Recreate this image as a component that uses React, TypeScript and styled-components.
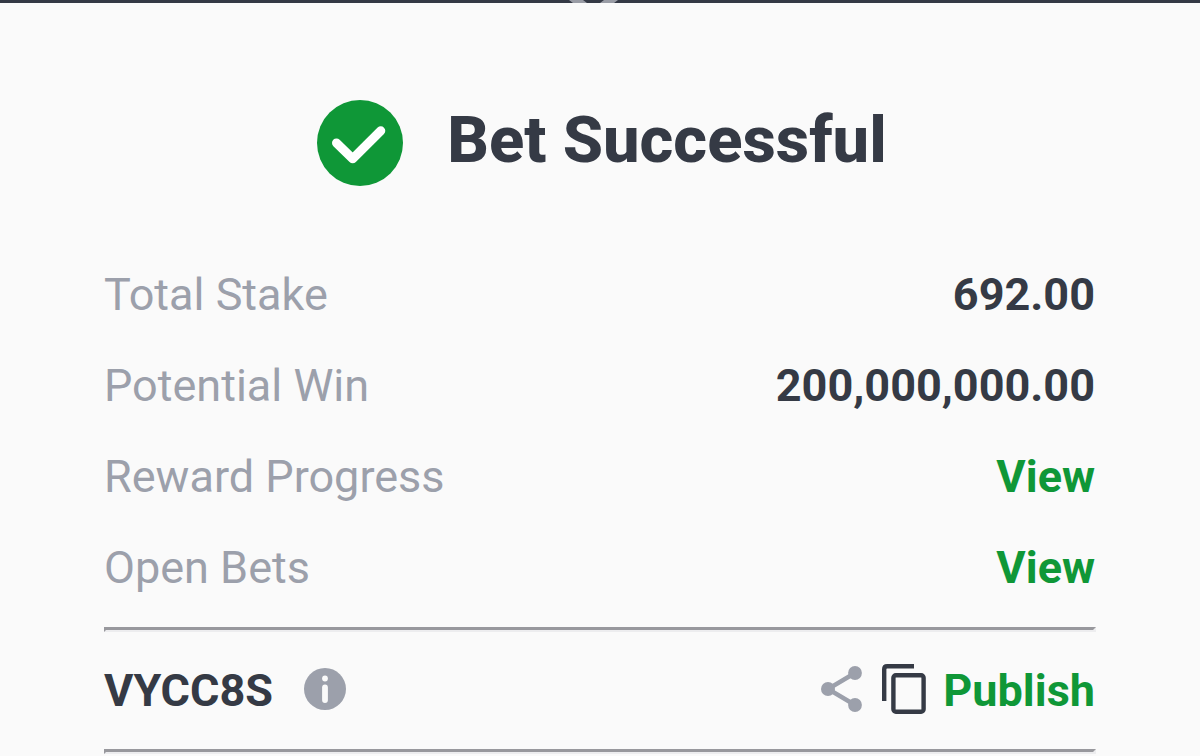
import React from "react";
import styled, { createGlobalStyle } from "styled-components";

const ink = "#353a45";
const muted = "#9ca0ab";
const green = "#0f9737";

const GlobalStyle = createGlobalStyle`
  * { box-sizing: border-box; }
  html { overflow: hidden; }
  body {
    margin: 0;
    background: #fafafa;
    color: ${ink};
    font-family: Roboto, "Liberation Sans", sans-serif;
  }
`;

const TopBar = styled.div`
  display: flex;
  justify-content: center;
  height: 3px;
  padding-right: 12px;
  overflow: hidden;
  background: #343945;
`;

const Receipt = styled.main`
  padding: 0 104px;
`;

const Header = styled.header`
  display: flex;
  align-items: center;
  justify-content: center;
  gap: 44px;
  padding: 97px 0 63px 4px;
`;

const Title = styled.h1`
  margin: 0;
  padding-bottom: 6px;
  font-size: 65px;
  line-height: 78px;
  font-weight: 800;
`;

const Details = styled.dl`
  margin: 0 0 14px;
`;

const DetailRow = styled.div`
  display: flex;
  align-items: center;
  justify-content: space-between;
  height: 91px;
  padding-right: 1px;
  font-size: 45px;
  line-height: 54px;
`;

const Label = styled.dt`
  color: ${muted};
`;

const Value = styled.dd`
  margin: 0;
  font-weight: 700;
`;

const ActionLink = styled.a`
  color: ${green};
  text-decoration: none;
`;

const Divider = styled.hr`
  height: 0;
  margin: 0;
  border-style: solid;
  border-width: 3px 3px 2px 2px;
  border-color: #98989d #ededef #ededef #98989d;
`;

const CodeRow = styled.section`
  display: flex;
  align-items: center;
  justify-content: space-between;
  height: 117px;
  padding-right: 1px;
`;

const Group = styled.div<{ $gap: number }>`
  display: flex;
  align-items: center;
  gap: ${(p) => p.$gap}px;
`;

const Code = styled.strong`
  font-size: 45px;
  line-height: 54px;
  font-weight: 700;
`;

const PlainButton = styled.button`
  display: flex;
  padding: 0;
  border: 0;
  background: none;
  color: ${green};
  font: 700 45px/54px Roboto, "Liberation Sans", sans-serif;
  cursor: pointer;
`;

const IconButton = styled(PlainButton)`
  padding-bottom: 4px;
`;

const details: { label: string; value: string; href?: string }[] = [
  { label: "Total Stake", value: "692.00" },
  { label: "Potential Win", value: "200,000,000.00" },
  { label: "Reward Progress", value: "View", href: "#reward-progress" },
  { label: "Open Bets", value: "View", href: "#open-bets" },
];

const HandleIcon = () => (
  <svg width="52" height="3" viewBox="0 0 52 3" fill="#999ca5" aria-hidden="true">
    <path d="M1 0H15L19 3H5ZM36 0H50L46 3H32Z" />
  </svg>
);

const SuccessIcon = () => (
  <svg width="86" height="86" viewBox="0 0 86 86" fill="none" aria-hidden="true">
    <circle cx="43" cy="43" r="43" fill={green} />
    <path d="M19.5 43 35.7 58.7 63.8 30.8" stroke="#fff" strokeWidth="9" strokeLinecap="round" strokeLinejoin="round" />
  </svg>
);

const InfoIcon = () => (
  <svg width="42" height="42" viewBox="0 0 42 42" aria-hidden="true">
    <circle cx="21" cy="21" r="21" fill={muted} />
    <circle cx="21" cy="10.5" r="2.9" fill="#fafafa" />
    <rect x="18.1" y="16.5" width="5.8" height="18.5" rx="2.9" fill="#fafafa" />
  </svg>
);

const ShareIcon = () => (
  <svg width="42" height="46" viewBox="0 0 42 46" aria-hidden="true">
    <path d="M34 7 7 23 34 39" fill="none" stroke={muted} strokeWidth="4.4" />
    <circle cx="34" cy="7" r="6.9" fill={muted} />
    <circle cx="7" cy="23" r="7" fill={muted} />
    <circle cx="34" cy="39" r="6.9" fill={muted} />
  </svg>
);

const CopyIcon = () => (
  <svg width="44" height="50" viewBox="0 0 44 50" fill="none" stroke={ink} strokeWidth="4.4" aria-hidden="true">
    <path d="M2.2 37V5.2Q2.2 2.2 5.2 2.2H32" />
    <rect x="11.4" y="11.2" width="30.2" height="36.6" rx="2.5" />
  </svg>
);

export default function App() {
  return (
    <>
      <GlobalStyle />
      <TopBar>
        <HandleIcon />
      </TopBar>
      <Receipt>
        <Header>
          <SuccessIcon />
          <Title>Bet Successful</Title>
        </Header>
        <Details>
          {details.map(({ label, value, href }) => (
            <DetailRow key={label}>
              <Label>{label}</Label>
              <Value>
                {href ? (
                  <ActionLink href={href} aria-label={`${value} ${label}`}>
                    {value}
                  </ActionLink>
                ) : (
                  value
                )}
              </Value>
            </DetailRow>
          ))}
        </Details>
        <Divider />
        <CodeRow>
          <Group $gap={31}>
            <Code>VYCC8S</Code>
            <IconButton type="button" aria-label="About this code">
              <InfoIcon />
            </IconButton>
          </Group>
          <Group $gap={17}>
            <Group $gap={19}>
              <IconButton type="button" aria-label="Share">
                <ShareIcon />
              </IconButton>
              <IconButton type="button" aria-label="Copy">
                <CopyIcon />
              </IconButton>
            </Group>
            <PlainButton type="button">Publish</PlainButton>
          </Group>
        </CodeRow>
        <Divider />
      </Receipt>
    </>
  );
}
